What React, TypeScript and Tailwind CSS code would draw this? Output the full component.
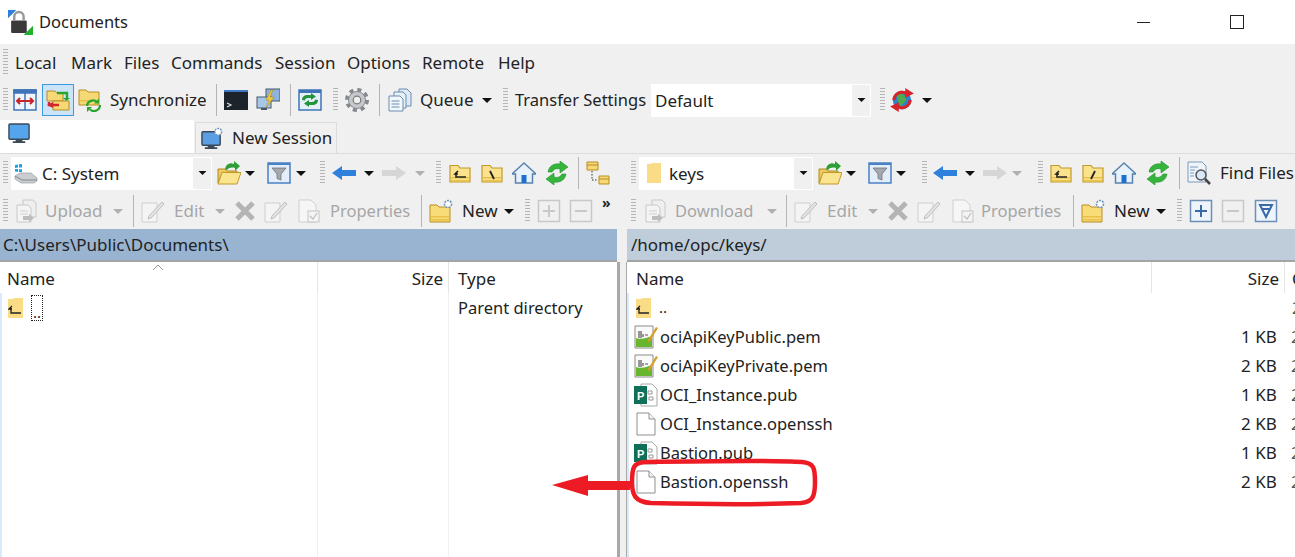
import React from 'react';

type P = { className?: string };

const Svg: React.FC<P & { children: React.ReactNode }> = ({ className = '', children }) => (
    <svg viewBox="0 0 24 24" className={`h-6 w-6 shrink-0 ${className}`}>{children}</svg>
);

const Grip: React.FC<P> = ({ className = '' }) => (
    <div className={`h-[24px] w-[5px] shrink-0 bg-[repeating-linear-gradient(to_bottom,#b4b4b4_0,#b4b4b4_1px,#f0f0f0_1px,#f0f0f0_3px)] ${className}`} />
);
const Sep: React.FC<P> = ({ className = '' }) => <div className={`h-[32px] w-px shrink-0 bg-[#b4b4b4] ${className}`} />;
const Caret: React.FC<P & { off?: boolean }> = ({ className = '', off }) => (
    <svg viewBox="0 0 10 5" className={`h-[5px] w-[10px] shrink-0 ${className}`}><path d="M0 0h10L5 5z" fill={off ? '#b0b0b0' : '#111'} /></svg>
);
const Label: React.FC<P & { children: React.ReactNode; off?: boolean }> = ({ className = '', off, children }) => (
    <span className={`shrink-0 whitespace-nowrap ${off ? 'text-[#a6a6a6]' : 'text-[#222]'} ${className}`}>{children}</span>
);

const FolderBase: React.FC = () => (
    <>
        <path d="M2 7V4.500h8L12 7h10v14H2z" fill="#fbe38e" stroke="#c09a2a" strokeWidth="1.200" />
        <path d="M2.600 16h18.800v1.500H2.600zM2.600 19h18.800v1.400H2.600z" fill="#e8c04a" />
    </>
);

const AppIcon: React.FC<P> = ({ className }) => (
    <Svg className={className}>
        <path d="M0 0h8L0 8z" fill="#2f7fdc" />
        <rect x="3" y="10" width="15" height="12" rx="1" fill="#3a3a3a" />
        <path d="M6 10V6.500a4.500 4.500 0 0 1 9 0V10" fill="none" stroke="#9a9a9a" strokeWidth="2.400" />
        <path d="M24 24h-9l9-9z" fill="#21b02c" />
    </Svg>
);
const CompareIcon: React.FC<P> = ({ className }) => (
    <Svg className={className}>
        <rect x="1" y="2" width="22" height="20" fill="#eef5fc" stroke="#3f74b8" strokeWidth="1.500" />
        <path d="M1 2h22v3H1zM12 2v20" stroke="#3f74b8" strokeWidth="1.500" fill="#3f74b8" />
        <path d="M4 13h16M7 10l-3 3 3 3M17 10l3 3-3 3" stroke="#c8242b" strokeWidth="2" fill="none" />
    </Svg>
);
const SyncDirs: React.FC<P> = ({ className }) => (
    <Svg className={className}>
        <path d="M1 3h8l2 2h6v8H1z" fill="#f6d875" stroke="#b88d22" />
        <path d="M7 13h16v9H7z" fill="#f6d875" stroke="#b88d22" />
        <path d="M11 5h10v5" stroke="#2aa52f" strokeWidth="2.400" fill="none" />
        <path d="M17 10h7l-3.500 3z" fill="#2aa52f" />
        <path d="M13 17H3v-3" stroke="#d3262b" strokeWidth="2.400" fill="none" />
        <path d="M7 20l-6-3 6-3z" fill="#d3262b" />
    </Svg>
);
const SyncFolder: React.FC<P> = ({ className }) => (
    <Svg className={className}>
        <path d="M1 4V2h7l2 2h11v13H1z" fill="#f6d875" stroke="#b88d22" />
        <path d="M1.500 12h19v1.500h-19z" fill="#e8c04a" />
        <path d="M9 18a6 6 0 0 1 10-4M22 17a6 6 0 0 1-10 4.500" stroke="#2aa52f" strokeWidth="2.200" fill="none" />
        <path d="M21 10.500v5h-5zM9 24v-5h5z" fill="#2aa52f" />
    </Svg>
);
const Terminal: React.FC<P> = ({ className }) => (
    <Svg className={className}>
        <rect x="0" y="2" width="24" height="20" fill="#1d232b" />
        <rect x="0" y="2" width="24" height="2" fill="#3f78c4" />
        <path d="M3 15l4 2-4 2" stroke="#ddd" strokeWidth="1.200" fill="none" />
    </Svg>
);
const Putty: React.FC<P> = ({ className }) => (
    <Svg className={className}>
        <rect x="10" y="1" width="14" height="12" fill="#8eb3dc" stroke="#47586c" />
        <rect x="1" y="9" width="14" height="11" fill="#a8c6e6" stroke="#47586c" />
        <path d="M5 20h6v2H5z" fill="#47586c" />
        <path d="M15 2l-5 10h3l-3 8 8-11h-4l3-7z" fill="#f5c93f" stroke="#a78312" strokeWidth=".5" />
    </Svg>
);
const SyncBrowse: React.FC<P> = ({ className }) => (
    <Svg className={className}>
        <rect x="1" y="2" width="22" height="20" fill="#e6f0fa" stroke="#3f74b8" strokeWidth="1.500" />
        <path d="M1 2h22v3H1z" fill="#3f74b8" />
        <path d="M4 12c0-3 2-5 6-5h3V5l5 3.500-5 3.500v-2h-3c-2 0-3 1-3 2.500zM20 12c0 3-2 5-6 5h-3v2l-5-3.500 5-3.500v2h3c2 0 3-1 3-2.500z" fill="#22953a" />
    </Svg>
);
const Gear: React.FC<P> = ({ className }) => (
    <Svg className={className}>
        <circle cx="12" cy="12" r="10" fill="none" stroke="#85898e" strokeWidth="4" strokeDasharray="4 3.850" />
        <circle cx="12" cy="12" r="8.500" fill="#c4c7cb" stroke="#85898e" />
        <circle cx="12" cy="12" r="3.800" fill="#f0f0f0" stroke="#777" strokeWidth="1.200" />
    </Svg>
);
const Queue: React.FC<P> = ({ className }) => (
    <Svg className={className}>
        <path d="M11 1h8l4 4v13H11z" fill="#dfeaf6" stroke="#6a8cb0" />
        <path d="M6 4h9l3 3v13H6z" fill="#e8f0f8" stroke="#6a8cb0" />
        <path d="M1 8h11l3 3v12H1z" fill="#f2f7fc" stroke="#6a8cb0" />
        <path d="M3.500 13h8M3.500 16h8M3.500 19h8" stroke="#6a8cb0" />
    </Svg>
);
const GlobeSync: React.FC<P> = ({ className }) => (
    <Svg className={className}>
        <circle cx="12" cy="12" r="8.500" fill="#2d80cc" />
        <path d="M7 6l7 1 2 5-5 6-3-5z" fill="#4eaa4d" />
        <path d="M3 12a9 9 0 0 1 12-8V1l8 5-8 4V7a6 6 0 0 0-9 5z" fill="#d8232a" />
        <path d="M21 12a9 9 0 0 1-12 8v3l-8-5 8-4v3a6 6 0 0 0 9-5z" fill="#d8232a" />
    </Svg>
);
const Monitor: React.FC<P> = ({ className }) => (
    <Svg className={className}>
        <rect x="1" y="2" width="21" height="16" rx="1" fill="#56a4ec" stroke="#3a4a5a" strokeWidth="1.500" />
        <path d="M8 18h7v2h3v2H5v-2h3z" fill="#3a4a5a" />
    </Svg>
);
const NewSessionIcon: React.FC<P> = ({ className }) => (
    <Svg className={className}>
        <rect x="1" y="5" width="19" height="14" rx="1" fill="#5a9fe4" stroke="#3a4a5a" strokeWidth="1.500" />
        <path d="M7 19h7v2h3v2H4v-2h3z" fill="#3a4a5a" />
        <circle cx="18" cy="5" r="3.500" fill="#fff" stroke="#6f93bd" strokeWidth="1.500" strokeDasharray="2 1" />
    </Svg>
);
const Drive: React.FC<P> = ({ className }) => (
    <Svg className={className}>
        <path d="M1 4l3-.500v3L1 7zM5 3.300L8 3v3.500L5 6.500zM1 8l3 .100V11l-3-.500zM5 8.200L8 8.300v3L5 11z" fill="#17a5e6" />
        <path d="M1 15l5-3h11l6 5v3l-3 2H7l-6-4z" fill="#c9cdd0" stroke="#8d9296" strokeWidth=".6" />
        <path d="M1 15l7 4h15" stroke="#84898c" fill="none" />
    </Svg>
);
const FolderOpenUp: React.FC<P> = ({ className }) => (
    <Svg className={className}>
        <path d="M1 8h7l2 2h10v3H5L1 22z" fill="#edc95e" stroke="#b18a22" />
        <path d="M5 11.500h19L20 23H1z" fill="#fbe48f" stroke="#c09a2a" />
        <path d="M8 8c1-5 5-7 9-5V0l6 5-5 5V7c-3-1-6-.500-8 2z" fill="#2f9e35" />
    </Svg>
);
const FilterBox: React.FC<P> = ({ className }) => (
    <Svg className={className}>
        <rect x="1" y="2" width="22" height="20" fill="#e4eefb" stroke="#4a80c4" strokeWidth="1.500" />
        <path d="M1 2h22v2H1z" fill="#4a80c4" />
        <path d="M5 7h14l-5 6v6l-4-1.500V13z" fill="#a4a9ae" stroke="#70757a" strokeWidth=".8" />
    </Svg>
);
const ArrowLeft: React.FC<P> = ({ className }) => (
    <Svg className={className}>
        <path d="M0 12l10-7v4h14v6H10v4z" fill="#2f7fdc" />
    </Svg>
);
const ArrowRight: React.FC<P> = ({ className }) => (
    <Svg className={className}>
        <path d="M24 12l-10-7v4H0v6h14v4z" fill="#d6d6d6" />
    </Svg>
);
const ParentFolder: React.FC<P> = ({ className }) => (
    <Svg className={className}>
        <FolderBase />
        <path d="M10 10L7 13l3 0M8 12v4h10" stroke="#222" strokeWidth="1.600" fill="none" />
    </Svg>
);
const RootFolder: React.FC<P & { slash?: string }> = ({ className, slash = 'M10 10l4 8' }) => (
    <Svg className={className}>
        <FolderBase />
        <path d={slash} stroke="#222" strokeWidth="1.800" fill="none" />
    </Svg>
);
const Home: React.FC<P> = ({ className }) => (
    <Svg className={className}>
        <path d="M12 2L0 13h3.500v9h17v-9H24z" fill="#e8f2fb" stroke="#5a82ad" strokeWidth="1.500" />
        <rect x="9.500" y="14" width="5" height="8" fill="#1f6fd0" />
    </Svg>
);
const Refresh: React.FC<P> = ({ className }) => (
    <Svg className={className}>
        <path d="M3 11C4 5 9 2 15 3V0l8 6-8 6V8c-4-1-6 0-8 3z" fill="#36b53c" stroke="#1f8f2a" strokeWidth=".6" />
        <path d="M21 13c-1 6-6 9-12 8v3l-8-6 8-6v4c4 1 6 0 8-3z" fill="#36b53c" stroke="#1f8f2a" strokeWidth=".6" />
    </Svg>
);
const Tree: React.FC<P> = ({ className }) => (
    <Svg className={className}>
        <path d="M1 1h11v8H1z" fill="#f6d875" stroke="#b88d22" />
        <path d="M1 4h11" stroke="#b88d22" />
        <path d="M6 10v9h6" stroke="#333" strokeDasharray="1.500 1.500" fill="none" />
        <path d="M13 15h10v8H13z" fill="#f6d875" stroke="#b88d22" />
        <path d="M13 18h10" stroke="#b88d22" />
    </Svg>
);
const FindIcon: React.FC<P> = ({ className }) => (
    <Svg className={className}>
        <path d="M1 1h14l4 4v16H1z" fill="#eef4fa" stroke="#7d9ab8" />
        <path d="M3 6h8M3 9h5M3 12h4M3 15h4" stroke="#7d9ab8" />
        <circle cx="14" cy="14" r="5" fill="#d8e8f4" stroke="#555" strokeWidth="1.500" />
        <path d="M18 18l5 5" stroke="#444" strokeWidth="2.500" />
    </Svg>
);
const OffDocs: React.FC<P> = ({ className }) => (
    <Svg className={className}>
        <path d="M9 1h10l3 3v14H9z" fill="#efefef" stroke="#c8c8c8" />
        <path d="M3 6h11l3 3v14H3z" fill="#f4f4f4" stroke="#c8c8c8" />
        <path d="M6 12h8M6 15h8" stroke="#cfcfcf" />
        <path d="M9 17h6v-2l5 4-5 4v-2H9z" fill="#bdbdbd" />
    </Svg>
);
const OffEdit: React.FC<P> = ({ className }) => (
    <Svg className={className}>
        <path d="M1 4h15v19H1z" fill="#f4f4f4" stroke="#cfcfcf" />
        <path d="M8 17l-1 3 3-1L23 5l-2-2z" fill="#e4e4e4" stroke="#bdbdbd" />
    </Svg>
);
const OffX: React.FC<P> = ({ className }) => (
    <Svg className={className}>
        <path d="M4 4l16 16M20 4L4 20" stroke="#b4b4b4" strokeWidth="5" />
    </Svg>
);
const OffProps: React.FC<P> = ({ className }) => (
    <Svg className={className}>
        <path d="M2 1h12l5 5v17H2z" fill="#f6f6f6" stroke="#cfcfcf" />
        <rect x="11" y="12" width="11" height="11" fill="#f4f4f4" stroke="#c4c4c4" />
        <path d="M13 17l3 3 4-6" stroke="#bdbdbd" strokeWidth="1.200" fill="none" />
    </Svg>
);
const NewFolder: React.FC<P> = ({ className }) => (
    <Svg className={className}>
        <path d="M1 8V6h7l2 2h11v15H1z" fill="#f8dc78" stroke="#b88d22" />
        <path d="M1.500 17h19v1.500h-19zM1.500 20h19v1.500h-19z" fill="#e8c04a" />
        <circle cx="19" cy="5" r="3.500" fill="#fff" stroke="#6f93bd" strokeWidth="1.600" strokeDasharray="2 1" />
    </Svg>
);
const SquareBtn: React.FC<P & { off?: boolean; d: string }> = ({ className, off, d }) => (
    <Svg className={className}>
        <rect x="1.500" y="1.500" width="21" height="21" fill={off ? '#f0f0f0' : '#eef4fb'} stroke={off ? '#c8c8c8' : '#6e8fb5'} strokeWidth="1.500" />
        <path d={d} stroke={off ? '#c8c8c8' : '#3a6aa5'} strokeWidth="2" fill="none" />
    </Svg>
);
const UpFolder: React.FC<P> = ({ className }) => (
    <svg viewBox="0 0 15 20" className={`h-5 w-[15px] shrink-0 ${className ?? ''}`}>
        <path d="M0 1h5l1-1h9v20H0z" fill="#fbdc86" />
        <path d="M4 8L1 11h3M3 10v5h10" stroke="#222" strokeWidth="1.300" fill="none" />
    </svg>
);
const PemIcon: React.FC<P> = ({ className }) => (
    <Svg className={className}>
        <path d="M1 1h18v22H1z" fill="#fafafa" stroke="#8a8a8a" />
        <path d="M2 13c6 2 10 0 16-2v11H2z" fill="#69b52e" />
        <path d="M5 6v7M7 6v7M9 9v3M11 10h3" stroke="#555" strokeWidth="1.200" />
        <path d="M14 15l8-13 2 1-8 13-2 1z" fill="#d99e2c" />
    </Svg>
);
const PubIcon: React.FC<P> = ({ className }) => (
    <Svg className={className}>
        <path d="M7 1h11l5 5v17H7z" fill="#fff" stroke="#a8a8a8" />
        <path d="M14 8h4v3h-4zM15 14h4v3h-4z" fill="none" stroke="#999" />
        <rect x="0" y="3" width="13" height="18" fill="#0e7058" />
        <text x="3" y="16.500" fontSize="11" fontWeight="700" fill="#fff" fontFamily="Liberation Sans, sans-serif">P</text>
    </Svg>
);
const BlankDoc: React.FC<P> = ({ className }) => (
    <Svg className={className}>
        <path d="M3 1h12l6 6v16H3z" fill="#fff" stroke="#8f8f8f" />
        <path d="M15 1v6h6" fill="#f4f4f4" stroke="#8f8f8f" />
    </Svg>
);

const Combo: React.FC<P & { width: string; children: React.ReactNode }> = ({ className = '', width, children }) => (
    <div className={`flex h-[33px] shrink-0 items-center bg-white ${width} ${className}`}>
        <div className="flex min-w-0 flex-1 items-center">{children}</div>
        <div className="flex h-full w-[19px] items-center justify-center border-y border-r border-white bg-[#f0f0f0]">
            <Caret className="!h-[4px] !w-[9px]" />
        </div>
    </div>
);

const Row: React.FC<P & { children: React.ReactNode }> = ({ className = '', children }) => (
    <div className={`flex items-center ${className}`}>{children}</div>
);

const rightFiles = [
    { name: 'ociApiKeyPublic.pem', size: '1 KB', Icon: PemIcon },
    { name: 'ociApiKeyPrivate.pem', size: '2 KB', Icon: PemIcon },
    { name: 'OCI_Instance.pub', size: '1 KB', Icon: PubIcon },
    { name: 'OCI_Instance.openssh', size: '2 KB', Icon: BlankDoc },
    { name: 'Bastion.pub', size: '1 KB', Icon: PubIcon },
    { name: 'Bastion.openssh', size: '2 KB', Icon: BlankDoc },
];

const menus = [
    { label: 'Local', cls: 'w-[56px]' },
    { label: 'Mark', cls: 'w-[53px]' },
    { label: 'Files', cls: 'w-[47px]' },
    { label: 'Commands', cls: 'w-[104px]' },
    { label: 'Session', cls: 'w-[72px]' },
    { label: 'Options', cls: 'w-[75px]' },
    { label: 'Remote', cls: 'w-[76px]' },
    { label: 'Help', cls: 'w-[50px]' },
];

export default function App() {
    return (
        <div className="relative h-[557px] w-[1295px] overflow-hidden bg-white font-['Noto_Sans',sans-serif] text-[17px] text-[#222]">
            {/* title bar */}
            <div className="relative flex h-[44px] items-center pl-[8px]">
                <AppIcon className="!h-[25px] !w-[25px]" />
                <span className="ml-[6px] text-[16.5px]">Documents</span>
                <div className="ml-auto mr-[51px] flex items-center">
                    <div className="h-px w-[13px] bg-[#222]" />
                    <div className="ml-[80px] h-[14px] w-[14px] border border-[#222]" />
                </div>
            </div>

            {/* menu */}
            <div className="flex h-[36px] items-center bg-[#f0f0f0] pl-[3px]">
                <Grip className="!h-[26px]" />
                <div className="ml-[7px] flex pt-[1px]">
                    {menus.map(m => (
                        <span key={m.label} className={`whitespace-nowrap ${m.cls}`}>{m.label}</span>
                    ))}
                </div>
            </div>

            {/* main toolbar */}
            <Row className="h-[40px] bg-[#f0f0f0] pl-[3px]">
                <Grip />
                <CompareIcon className="ml-[5px]" />
                <div className="ml-[5px] flex h-[32px] w-[32px] items-center justify-center border border-[#3c9ae0] bg-[#cce4f7]">
                    <SyncDirs />
                </div>
                <SyncFolder className="ml-[4px]" />
                <Label className="ml-[8px] w-[106px]">Synchronize</Label>
                <Sep />
                <Terminal className="ml-[7px]" />
                <Putty className="ml-[8px]" />
                <Sep className="ml-[10px]" />
                <SyncBrowse className="ml-[7px]" />
                <Grip className="ml-[11px]" />
                <Gear className="ml-[7px]" />
                <Sep className="ml-[10px]" />
                <Queue className="ml-[8px]" />
                <Label className="ml-[8px] w-[62px]">Queue</Label>
                <Caret />
                <Grip className="ml-[11px]" />
                <Label className="ml-[7px] w-[136px] text-[16.5px]">Transfer Settings</Label>
                <Combo width="w-[220px]"><span className="pl-[4px] pt-[2px]">Default</span></Combo>
                <Grip className="ml-[9px]" />
                <GlobeSync className="ml-[4px] !h-[26px] !w-[26px]" />
                <Caret className="ml-[7px]" />
            </Row>

            {/* tabs */}
            <div className="flex h-[34px] items-end border-b border-[#dcdcdc] bg-[#f0f0f0]">
                <div className="flex h-[33px] w-[194px] items-center bg-white pb-[6px] pl-[8px]">
                    <Monitor className="!h-[23px] !w-[23px]" />
                </div>
                <div className="ml-px flex h-[31px] w-[142px] items-center border border-b-0 border-[#dcdcdc] pl-[5px]">
                    <NewSessionIcon className="!h-[23px] !w-[23px]" />
                    <span className="ml-[8px] whitespace-nowrap">New Session</span>
                </div>
            </div>

            {/* panes */}
            <div className="flex h-[403px]">
                {/* left pane */}
                <div className="flex w-[617px] shrink-0 flex-col">
                    <Row className="h-[38px] bg-[#f0f0f0] pl-[3px]">
                        <Grip />
                        <Combo width="w-[201px]" className="ml-[3px]">
                            <Drive className="ml-[3px]" />
                            <span className="ml-[4px] whitespace-nowrap pt-[2px]">C: System</span>
                        </Combo>
                        <FolderOpenUp className="ml-[5px]" />
                        <Caret className="ml-[4px]" />
                        <FilterBox className="ml-[12px]" />
                        <Caret className="ml-[5px]" />
                        <Grip className="ml-[14px]" />
                        <ArrowLeft className="ml-[7px]" />
                        <Caret className="ml-[8px]" />
                        <ArrowRight className="ml-[8px]" />
                        <Caret off className="ml-[9px]" />
                        <Grip className="ml-[11px]" />
                        <ParentFolder className="ml-[7px]" />
                        <RootFolder className="ml-[8px]" />
                        <Home className="ml-[8px]" />
                        <Refresh className="ml-[9px]" />
                        <Sep className="ml-[9px]" />
                        <Tree className="ml-[7px]" />
                    </Row>
                    <Row className="h-[37px] bg-[#f0f0f0] pl-[3px] pt-[1px]">
                        <Grip />
                        <OffDocs className="ml-[6px]" />
                        <Label off className="ml-[7px] w-[68px]">Upload</Label>
                        <Caret off />
                        <Sep className="ml-[10px]" />
                        <OffEdit className="ml-[7px]" />
                        <Label off className="ml-[9px] w-[41px]">Edit</Label>
                        <Caret off />
                        <OffX className="ml-[8px]" />
                        <OffEdit className="ml-[7px]" />
                        <OffProps className="ml-[9px]" />
                        <Label off className="ml-[9px] w-[91px] text-[16.5px]">Properties</Label>
                        <Sep />
                        <NewFolder className="ml-[7px]" />
                        <Label className="ml-[9px] w-[42px]">New</Label>
                        <Caret />
                        <Grip className="ml-[11px]" />
                        <SquareBtn off d="M12 6v12M6 12h12" className="ml-[7px]" />
                        <SquareBtn off d="M6 12h12" className="ml-[8px]" />
                        <span className="ml-[9px] mb-[16px] text-[14px] font-bold leading-none">»</span>
                    </Row>
                    <div className="flex h-[33px] shrink-0 items-center border-b-2 border-[#a4a4a4] bg-[#99b4d1] pl-[3px]">C:\Users\Public\Documents\</div>
                    <div className="relative flex h-[31px] shrink-0 items-center">
                        <span className="w-[317px] pl-[7px] pt-[2px]">Name</span>
                        <div className="flex h-full w-[132px] items-center justify-end border-x border-[#e5e5e5] pr-[5px] pt-[2px]">Size</div>
                        <span className="pl-[9px] pt-[2px]">Type</span>
                        <svg viewBox="0 0 12 6" className="absolute left-[152px] top-[2px] h-[6px] w-[12px]"><path d="M1 6l5-5 5 5" stroke="#999" fill="none" /></svg>
                    </div>
                    <div className="min-h-0 flex-1 border-l-2 border-[#d9ebfa]">
                        <div className="flex h-[29px] items-center">
                            <UpFolder className="ml-[6px]" />
                            <span className="relative ml-[8px] flex h-[26px] w-[12px] items-end justify-center border border-dotted border-[#222] text-[15px] leading-none">..</span>
                            <span className="ml-[415px] pt-[2px] text-[16.5px]">Parent directory</span>
                        </div>
                        <div className="ml-[315px] mt-[-29px] h-[300px] w-[132px] border-x border-[#f0f0f0]" />
                    </div>
                </div>

                {/* splitter */}
                <div className="flex w-[10px] shrink-0 flex-col">
                    <div className="h-[108px] bg-[#f0f0f0]" />
                    <div className="flex-1 border-l-[3px] border-r border-[#a8a8a8] bg-[#f0f0f0]" />
                </div>

                {/* right pane */}
                <div className="flex min-w-0 flex-1 flex-col">
                    <Row className="h-[38px] bg-[#f0f0f0]">
                        <Grip className="ml-[4px]" />
                        <Combo width="w-[174px]" className="ml-[3px]">
                            <svg viewBox="0 0 14 20" className="ml-[8px] h-5 w-[14px] shrink-0"><path d="M0 1h4l1-1h9v20H0z" fill="#fbdc86" /></svg>
                            <span className="ml-[8px] pt-[2px]">keys</span>
                        </Combo>
                        <FolderOpenUp className="ml-[5px]" />
                        <Caret className="ml-[4px]" />
                        <FilterBox className="ml-[12px]" />
                        <Caret className="ml-[4px]" />
                        <Grip className="ml-[16px]" />
                        <ArrowLeft className="ml-[6px]" />
                        <Caret className="ml-[8px]" />
                        <ArrowRight className="ml-[8px]" />
                        <Caret off className="ml-[5px]" />
                        <Grip className="ml-[16px]" />
                        <ParentFolder className="ml-[6px]" />
                        <RootFolder slash="M10 18l4-8" className="ml-[8px]" />
                        <Home className="ml-[7px]" />
                        <Refresh className="ml-[10px]" />
                        <Sep className="ml-[9px]" />
                        <FindIcon className="ml-[7px]" />
                        <Label className="ml-[9px]">Find Files</Label>
                    </Row>
                    <Row className="h-[37px] bg-[#f0f0f0] pt-[1px]">
                        <Grip className="ml-[4px]" />
                        <OffDocs className="ml-[7px]" />
                        <Label off className="ml-[8px] w-[92px] text-[16.5px]">Download</Label>
                        <Caret off />
                        <Sep className="ml-[9px]" />
                        <OffEdit className="ml-[7px]" />
                        <Label off className="ml-[9px] w-[41px]">Edit</Label>
                        <Caret off />
                        <OffX className="ml-[8px]" />
                        <OffEdit className="ml-[7px]" />
                        <OffProps className="ml-[10px]" />
                        <Label off className="ml-[6px] w-[92px] text-[16.5px]">Properties</Label>
                        <Sep />
                        <NewFolder className="ml-[7px]" />
                        <Label className="ml-[9px] w-[42px]">New</Label>
                        <Caret />
                        <Grip className="ml-[11px]" />
                        <SquareBtn d="M12 6v12M6 12h12" className="ml-[7px]" />
                        <SquareBtn off d="M6 12h12" className="ml-[8px]" />
                        <SquareBtn d="M6 6h12l-6 12zM8 10h8" className="ml-[9px]" />
                    </Row>
                    <div className="flex h-[33px] shrink-0 items-center border-b-2 border-[#a4a4a4] bg-[#bfcddb] pl-[4px]">/home/opc/keys/</div>
                    <div className="flex h-[31px] shrink-0 items-center whitespace-nowrap">
                        <span className="w-[524px] shrink-0 pl-[9px] pt-[2px]">Name</span>
                        <div className="flex h-full w-[134px] shrink-0 items-center justify-end border-x border-[#e5e5e5] pr-[5px] pt-[2px]">Size</div>
                        <span className="ml-[7px] pt-[2px]">Changed</span>
                    </div>
                    <div className="min-h-0 flex-1 overflow-hidden border-l-2 border-[#d9ebfa]">
                        <div className="flex h-[29px] items-center whitespace-nowrap">
                            <UpFolder className="ml-[7px]" />
                            <span className="ml-[8px] w-[633px] shrink-0 text-[15px]">..</span>
                            <span className="text-[#555]">2</span>
                        </div>
                        {rightFiles.map(f => (
                            <div key={f.name} className="flex h-[29px] items-center whitespace-nowrap">
                                <f.Icon className="ml-[5px]" />
                                <span className="ml-[2px] w-[581px] shrink-0 pt-[2px] text-[16.5px]">{f.name}</span>
                                <span className="w-[35px] shrink-0 text-right">{f.size}</span>
                                <span className="ml-[15px] text-[#555]">2</span>
                            </div>
                        ))}
                    </div>
                </div>
            </div>

            {/* annotation */}
            <svg viewBox="0 0 270 60" className="absolute left-[550px] top-[458px] h-[60px] w-[270px]">
                <path d="M2 27l36-10v6h42v9H38v6z" fill="#ed1c24" />
                <path d="M94 4c60-1 130-2 158 0 12 1 13 6 13 20 0 14-2 20-14 21-50 2-110 1-150 0-16-1-19-8-19-21 0-15 2-19 12-20z" fill="none" stroke="#ed1c24" strokeWidth="4.500" />
            </svg>
        </div>
    );
}
